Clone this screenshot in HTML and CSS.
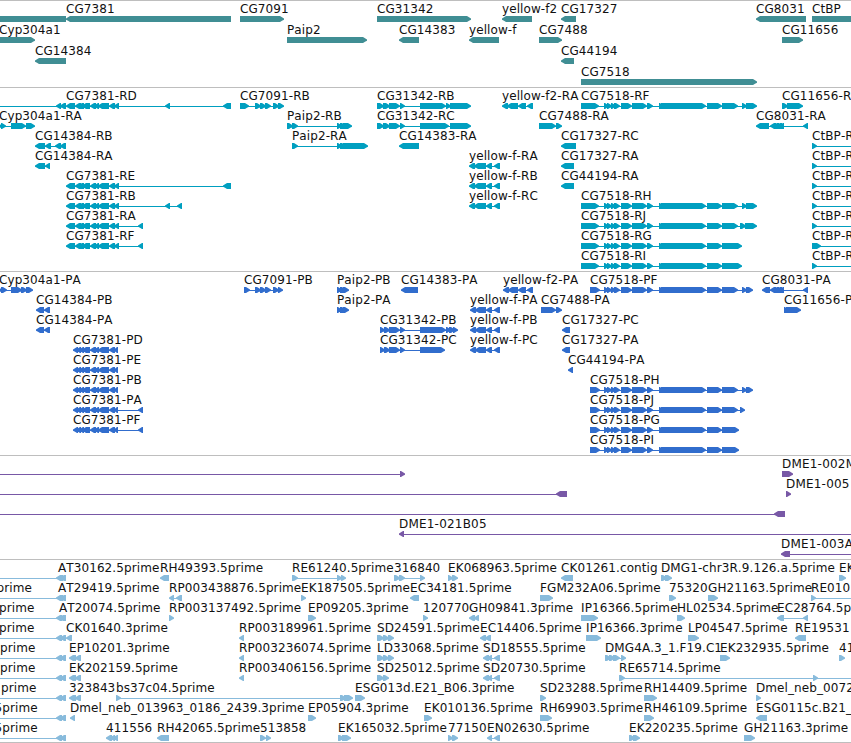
FILE: index.html
```html
<!DOCTYPE html>
<html lang="en">
<head>
	<meta charset="UTF-8">
	<title>Genome browser</title>
	<link rel="stylesheet" href="styles.css">
</head>
<body>
<div id="browser">
	<div id="gene" class="track"></div>
	<div id="transcript" class="track"></div>
	<div id="protein" class="track"></div>
	<div id="bac" class="track"></div>
	<div id="est" class="track"></div>
</div>
<script src="tracks.js"></script>
</body>
</html>
```

FILE: styles.css
```css
body {
	margin: 0;
	background-color: white;
}
#browser {
	width: 851px;
	overflow: hidden;
	border-bottom: 1px solid #bebebe;
}
.track {
	padding: 1px 0 2px;
	border-top: 1px solid #bebebe;
}
.row {
	display: block;
	width: 851px;
	height: 20px;
	overflow: visible;
}
.row text {
	font-family: "DejaVu Sans", sans-serif;
	font-size: 12px;
	font-kerning: none;
	letter-spacing: 0.09px;
	fill: #111;
}
/* track colours */
#gene {
	padding-bottom: 1px;
	color: #408e94;
}
#gene .row {
	height: 21px;
}
#transcript {
	color: #009fc0;
}
#protein {
	color: #316dcd;
}
#bac {
	color: #7858a6;
}
#bac text {
	letter-spacing: 0.2px;
}
#est {
	padding-bottom: 1px;
	color: #88bbdc;
}
.feature {
	fill: currentColor;
}
.intron {
	fill: currentColor;
	shape-rendering: crispEdges;
}
```

FILE: tracks.js
```javascript
//shared exon lists
var e7381 = '66-75 75-81 78-84 82-90 90-96 94-99 98-109 109-115 114-119',
	p7381 = '73-78 76-81 79-84 82-90 90-96 94-99 98-109 109-115 114-118',
	e7518 = '604-609 607-612 611-616 614-620 621-632 632-647 647-653 659-663 661-706 707-722 ',
	yf = '469-475 474-486 486-492 494-500',
	pyf = '470-476 475-486 486-492 494-500',
	left = '|0|-|-30--20 56-62 60-66',
	ctbp = 'CtBP-RA|812|+|812-817 900-905';

//label|label x|strand|blocks
var tracks = {
	gene: [
		['|0|-|-30-66', 'CG7381|66|-|66-231', 'CG7091|240|+|240-284', 'CG31342|377|+|377-471', 'yellow-f2|502|-|502-532', 'CG17327|561|-|561-576', 'CG8031|756|-|756-806', 'CtBP|812|+|812-900'],
		['Cyp304a1|-1|+|-20-35', 'Paip2|287|+|287-367', 'CG14383|399|-|399-419', 'yellow-f|469|-|469-499', 'CG7488|539|+|539-562', 'CG11656|782|+|782-803'],
		['CG14384|35|-|35-66', 'CG44194|561|-|561-574'],
		['CG7518|581|+|581-757']
	],
	transcript: [
		['|0|-|-30--20 56-61 60-66', 'CG7381-RD|66|-|' + e7381 + ' 165-170 223-231', 'CG7091-RB|240|+|240-249 255-261 260-266 265-271 273-279 278-284', 'CG31342-RB|377|+|377-384 383-390 389-400 400-405 420-446 446-451 450-471', 'yellow-f2-RA|502|-|502-508 507-518 518-526 527-533', 'CG7518-RF|581|+|581-599 ' + e7518 + '722-738 742-747 746-757', 'CG11656-RA|782|+|782-788 787-803'],
		['Cyp304a1-RA|-1|+|-3-2 1-6 11-26 26-35', 'Paip2-RB|287|+|287-293 292-298 337-342 340-346 343-352', 'CG31342-RC|377|+|377-384 383-390 389-400 400-405 420-449 450-471', 'CG7488-RA|539|+|539-556 556-562', 'CG8031-RA|756|-|756-769 770-776 773-779 776-782 779-784 803-808'],
		['CG14384-RB|35|-|35-45 45-51 55-61 60-66', 'Paip2-RA|292|+|292-298 337-342 340-346 343-368', 'CG14383-RA|399|-|399-419', 'CG17327-RC|561|-|561-576', ctbp],
		['CG14384-RA|35|-|35-45 45-50', 'yellow-f-RA|469|-|' + yf, 'CG17327-RA|561|-|561-574', ctbp],
		['CG7381-RE|66|-|' + e7381 + ' 223-231', 'yellow-f-RB|469|-|' + yf, 'CG44194-RA|561|-|561-574', ctbp],
		['CG7381-RB|66|-|' + e7381 + ' 165-170 177-182', 'yellow-f-RC|469|-|' + yf, 'CG7518-RH|581|+|581-599 ' + e7518 + '722-738 742-747 746-757', ctbp],
		['CG7381-RA|66|-|' + e7381 + ' 138-143', 'CG7518-RJ|581|+|581-599 ' + e7518 + '722-738 740-746 745-757', ctbp],
		['CG7381-RF|66|-|' + e7381 + ' 138-143', 'CG7518-RG|581|+|581-599 ' + e7518 + '722-742', 'CtBP-RA|812|+|812-821 900-905'],
		['CG7518-RI|581|+|581-599 ' + e7518 + '722-742', ctbp]
	],
	protein: [
		['Cyp304a1-PA|-1|+|-3-2 1-7 11-22 21-27 26-33', 'CG7091-PB|244|+|244-250 255-261 260-266 265-271 273-279 278-283', 'Paip2-PB|337|+|337-342 340-346 343-349', 'CG14383-PA|401|-|401-418', 'yellow-f2-PA|503|-|503-509 508-518 518-526 527-533', 'CG7518-PF|590|+|590-600 ' + e7518 + '722-738 742-747 746-753', 'CG8031-PA|762|-|762-770 770-776 773-779 776-782 779-784 803-808'],
		['CG14384-PB|36|-|36-44 44-50', 'Paip2-PA|337|+|337-342 340-346 343-349', 'yellow-f-PA|470|-|' + pyf, 'CG7488-PA|541|+|541-556 556-562', 'CG11656-PA|784|+|784-788 786-801'],
		['CG14384-PA|36|-|36-44 44-50', 'CG31342-PB|380|+|380-385 384-390 389-400 400-405 420-446 446-451 449-455 453-458', 'yellow-f-PB|470|-|' + pyf, 'CG17327-PC|562|-|562-570'],
		['CG7381-PD|73|-|' + p7381, 'CG31342-PC|380|+|380-385 384-390 389-400 400-405 420-445', 'yellow-f-PC|470|-|' + pyf, 'CG17327-PA|562|-|562-570'],
		['CG7381-PE|73|-|' + p7381, 'CG44194-PA|568|-|568-573'],
		['CG7381-PB|73|-|' + p7381, 'CG7518-PH|590|+|590-600 ' + e7518 + '722-738 742-747 746-753'],
		['CG7381-PA|73|-|' + p7381 + ' 138-143', 'CG7518-PJ|590|+|590-600 ' + e7518 + '722-738 740-745'],
		['CG7381-PF|73|-|' + p7381 + ' 138-143', 'CG7518-PG|590|+|590-600 ' + e7518 + '722-739'],
		['CG7518-PI|590|+|590-600 ' + e7518 + '722-739']
	],
	bac: [
		['|0|+|-30--20 400-405', 'DME1-002M05|782|+|782-793'],
		['|0|-|-30--20 556-567', 'DME1-005|786|+|786-791'],
		['|0|-|-30--20 774-785'],
		['DME1-021B05|399|-|399-404 900-905'],
		['DME1-003A|781|-|781-790 900-905']
	],
	est: [
		[left, 'AT30162.5prime|58|-|58-63 61-66', 'RH49393.5prime|160|-|160-169', 'RE61240.5prime|292|+|292-298 337-342 341-346', '316840|394|+|394-400 399-405 420-425', 'EK068963.5prime|448|+|448-453 452-458', 'CK01261.contig|561|-|561-573', 'DMG1-chr3R.9.126.a.5prime|661|+|661-667 665-672', 'EK|839|+|839-846'],
		['prime|-3.5|-|', left, 'AT29419.5prime|58|-|58-63 61-66', 'RP003438876.5prime|169|-|169-174 176-182', 'EK187505.5prime|301|+|301-306', 'EC34181.5prime|410|-|410-419', 'FGM232A06.5prime|540|+|540-553', '75320|669|+|669-676', 'GH21163.5prime|708|+|708-718', 'RE010|811|+|811-816 900-905'],
		['prime|-1|-|', left, 'AT20074.5prime|59|-|59-64 61-66', 'RP003137492.5prime|169|+|169-174', 'EP09205.3prime|308|+|308-316', '120770|423|+|423-428', 'GH09841.3prime|469|-|469-475 474-479', 'IP16366.5prime|581|+|581-598', 'HL02534.5prime|677|+|677-685', 'EC28764.5prime|777|-|777-784 803-808'],
		['prime|-1|-|', left, 'CK01640.3prime|66|-|66-72', 'RP003189961.5prime|239|-|239-244', 'SD24591.5prime|377|+|377-384 383-389 388-394', 'EC14406.5prime|480|-|480-486 485-491', 'IP16366.3prime|586|+|586-601', 'LP04547.5prime|688|+|688-699', 'RE19531|795|-|795-806'],
		['prime|0|-|', left, 'EP10201.3prime|69|-|69-76 75-81', 'RP003236074.5prime|239|-|239-244', 'LD33068.5prime|377|+|377-384 383-389 388-394', 'SD18555.5prime|483|-|483-489 487-492 494-500', 'DMG4A.3_1.F19.C1|605|+|605-611 609-615 613-620 621-626', 'EK232935.5prime|720|+|720-730', '41|839|+|839-845'],
		['prime|0|-|', left, 'EK202159.5prime|69|-|69-76 75-81', 'RP003406156.5prime|239|-|239-244', 'SD25012.5prime|377|+|377-384 383-389', 'SD20730.5prime|483|-|483-489 487-492 494-500', 'RE65714.5prime|619|+|619-625 813-818 900-905'],
		['prime|1|-|', left, '323843|69|-|69-76 75-81', 'bs37c04.5prime|116|+|116-121 340-346 344-353', 'ESG013d.E21_B06.3prime|355|+|355-365', 'SD23288.5prime|540|+|540-546', 'RH14409.5prime|644|+|644-657', 'Dmel_neb_0072|756|+|756-761'],
		['5prime|-5.5|-|', left, 'Dmel_neb_013963_0186_2439.3prime|70|-|70-75', 'EP05904.3prime|308|+|308-316', 'EK010136.5prime|424|+|424-432', 'RH69903.5prime|540|+|540-552', 'RH46109.5prime|644|+|644-654', 'ESG0115c.B21_C|756|-|756-767'],
		['5prime|-5.5|-|', left, '411556|106|-|106-112 110-115 113-118', 'RH42065.5prime|157|-|157-169', '513858|260|+|260-266 266-271', 'EK165032.5prime|338|+|338-344 342-351', '77150|448|+|448-453 452-458', 'EN02630.5prime|487|-|487-492 494-500', 'EK220235.5prime|629|+|629-635 633-640', 'GH21163.3prime|744|+|744-755']
	]
};

//one block, pointed towards its strand
function block(a, b, dir) {
	var tip = dir == '+' ? b : a,
		end = dir == '+' ? a : b,
		s = dir == '+' ? -1 : 1,
		head = Math.min(4, b - a - 1);
	return 'M' + end + ' 14H' + (tip + s * head) +
		'L' + (tip + s * head / 2) + ' 15.2L' + tip + ' 16.5V17.8L' +
		(tip + s * head / 2) + ' 18.8L' + (tip + s * head) + ' 20H' + end + 'Z';
}

function feature(str) {
	var p = str.split('|'), d = '', min = Infinity, max = -Infinity, html = '';
	//overlapping blocks wind the same way, so the path stays filled
	p[3].replace(/(-?\d+)-(-?\d+)/g, function (m, a, b) {
		a = +a;
		b = +b;
		min = Math.min(min, a);
		max = Math.max(max, b);
		d += block(a, b, p[2]);
	});
	if (d) {
		html += '<rect class="intron" x="' + (min + 1) + '" y="17" width="' + (max - min - 2) + '" height="1"/>';
		html += '<path class="feature" d="' + d + '"/>';
	}
	if (p[0]) {
		html += '<text x="' + p[1] + '" y="11">' + p[0] + '</text>';
	}
	return html;
}

for (var id in tracks) {
	document.getElementById(id).innerHTML = tracks[id].map(function (row) {
		return '<svg class="row">' + row.map(feature).join('') + '</svg>';
	}).join('');
}
```
